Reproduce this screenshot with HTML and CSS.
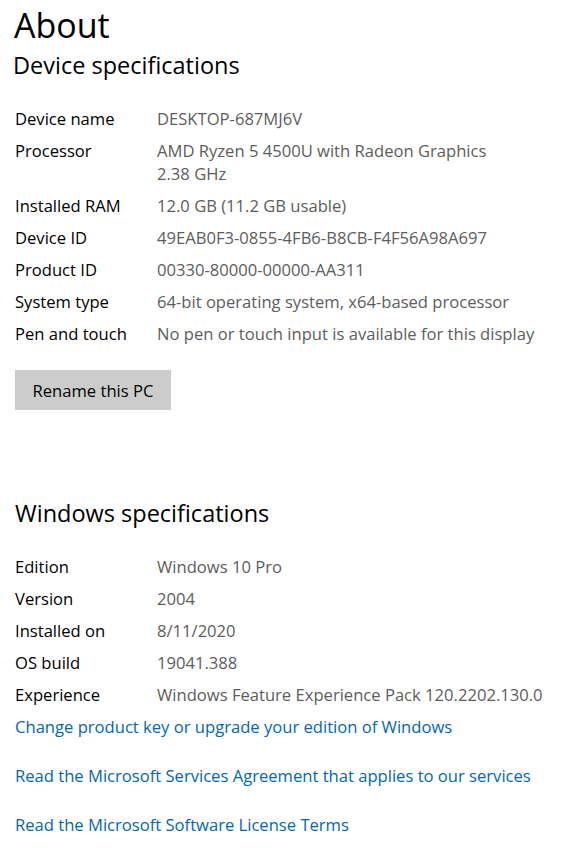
FILE: index.html
```html
<!DOCTYPE html>
<html lang="en">
<head>
    <meta charset="UTF-8">
    <title>About</title>
    <link rel="stylesheet" href="styles.css">
</head>
<body>
    <h1 class="page-title">About</h1>
    <section class="specs">
        <h2 class="section-title device">Device specifications</h2>
        <div class="spec-list">
            <div class="spec-row"><span class="spec-label">Device name</span><span class="spec-value">DESKTOP-687MJ6V</span></div>
            <div class="spec-row"><span class="spec-label">Processor</span><span class="spec-value">AMD Ryzen 5 4500U with Radeon Graphics<br>2.38 GHz</span></div>
            <div class="spec-row"><span class="spec-label">Installed RAM</span><span class="spec-value">12.0 GB (11.2 GB usable)</span></div>
            <div class="spec-row"><span class="spec-label">Device ID</span><span class="spec-value">49EAB0F3-0855-4FB6-B8CB-F4F56A98A697</span></div>
            <div class="spec-row"><span class="spec-label">Product ID</span><span class="spec-value">00330-80000-00000-AA311</span></div>
            <div class="spec-row"><span class="spec-label">System type</span><span class="spec-value">64-bit operating system, x64-based processor</span></div>
            <div class="spec-row"><span class="spec-label">Pen and touch</span><span class="spec-value">No pen or touch input is available for this display</span></div>
        </div>
        <button class="btn-rename">Rename this PC</button>
    </section>
    <section class="specs windows">
        <h2 class="section-title">Windows specifications</h2>
        <div class="spec-list">
            <div class="spec-row"><span class="spec-label">Edition</span><span class="spec-value">Windows 10 Pro</span></div>
            <div class="spec-row"><span class="spec-label">Version</span><span class="spec-value">2004</span></div>
            <div class="spec-row"><span class="spec-label">Installed on</span><span class="spec-value">8/11/2020</span></div>
            <div class="spec-row"><span class="spec-label">OS build</span><span class="spec-value">19041.388</span></div>
            <div class="spec-row"><span class="spec-label">Experience</span><span class="spec-value">Windows Feature Experience Pack 120.2202.130.0</span></div>
        </div>
        <div class="links">
            <a href="#">Change product key or upgrade your edition of Windows</a>
            <a href="#">Read the Microsoft Services Agreement that applies to our services</a>
            <a href="#">Read the Microsoft Software License Terms</a>
        </div>
    </section>
</body>
</html>
```

FILE: styles.css
```css
:root {
    --text: #000;
    --value: #5d5d5d;
    --link: #0067b8;
    --btn: #cccccc;
}
body {
    margin: 0;
    padding: 0 15px;
    background: #fff;
    color: var(--text);
    font-family: 'Open Sans', 'Noto Sans', Arial, sans-serif;
    font-size: 16.6px;
}
.page-title {
    font-size: 34px;
    font-weight: 400;
    line-height: 44px;
    margin: 3px 0 0 -1px;
}
.section-title {
    font-size: 23.5px;
    font-weight: 400;
    line-height: 32px;
    margin: 0;
}
.section-title.device {
    margin: 2px 0 0 -2px;
}
.spec-list {
    display: flex;
    flex-direction: column;
    gap: 9px;
    margin-top: 26px;
}
.spec-row {
    display: flex;
    line-height: 23px;
}
.spec-label {
    width: 142px;
    flex-shrink: 0;
}
.spec-value { color: var(--value); }
.btn-rename {
    margin-top: 25px;
    background: var(--btn);
    border: none;
    font-family: inherit;
    font-size: 16.6px;
    color: #000;
    height: 40px;
    width: 156px;
    padding: 0;
}
.windows { margin-top: 87px; }
.links {
    display: flex;
    flex-direction: column;
    align-items: flex-start;
    gap: 26px;
    margin-top: 9px;
}
.links a {
    color: var(--link);
    text-decoration: none;
    line-height: 23px;
}
```
